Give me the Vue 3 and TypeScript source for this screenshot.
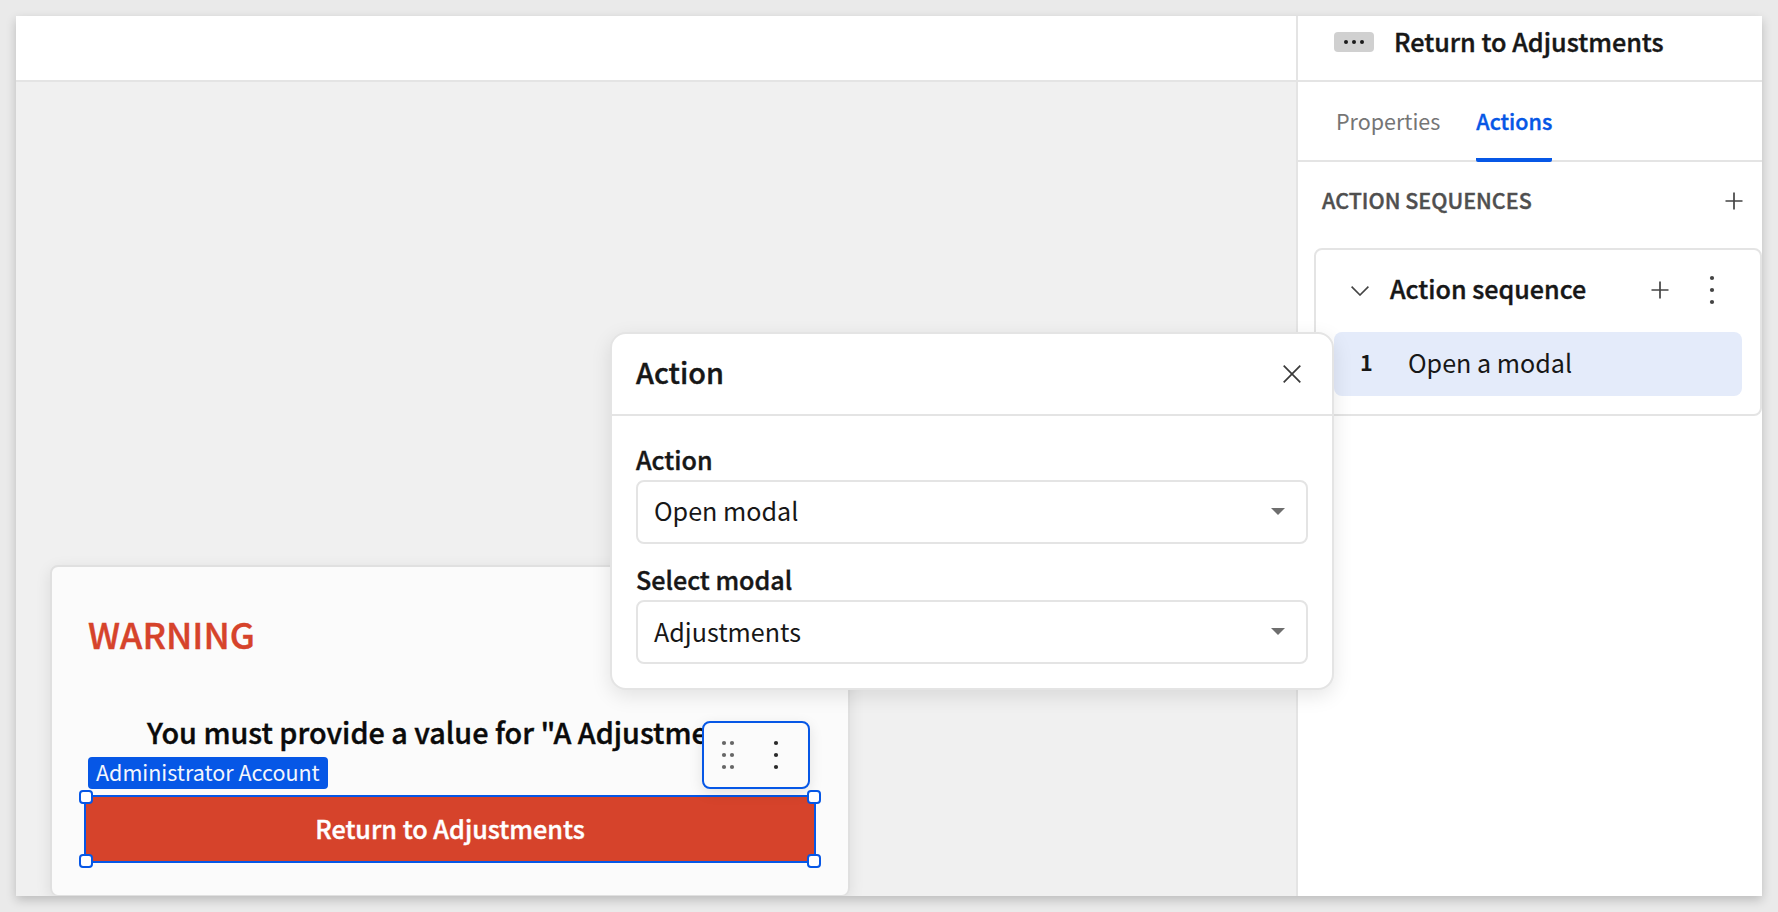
<script setup lang="ts">
interface Field {
  label: string
  value: string
}

const title = 'Return to Adjustments'
const tabs: string[] = ['Properties', 'Actions']
const activeTab = 'Actions'
const fields: Field[] = [
  { label: 'Action', value: 'Open modal' },
  { label: 'Select modal', value: 'Adjustments' },
]
const corners: string[] = ['tl', 'tr', 'bl', 'br']
const dotRows: number[] = [6, 18, 30]
</script>

<template>
  <div class="page">
    <div class="window">
      <main class="workspace">
        <div class="topbar"></div>
        <div class="canvas">
          <section class="card">
            <h1 class="warning">WARNING</h1>
            <p class="message">You must provide a value for "A Adjustment"</p>
            <div class="selection">
              <button class="return">{{ title }}</button>
              <span class="tag">Administrator Account</span>
              <div class="tools">
                <svg width="36" height="36" viewBox="0 0 36 36" fill="#666">
                  <template v-for="y in dotRows" :key="y">
                    <circle cx="14" :cy="y" r="2.1" />
                    <circle cx="22" :cy="y" r="2.1" />
                  </template>
                </svg>
                <svg width="36" height="36" viewBox="0 0 36 36" fill="#292929">
                  <circle v-for="y in dotRows" :key="y" cx="18" :cy="y" r="2.1" />
                </svg>
              </div>
              <i v-for="c in corners" :key="c" class="handle" :class="c"></i>
            </div>
          </section>
        </div>
      </main>

      <aside class="sidebar">
        <header class="head">
          <svg class="chip" width="40" height="20" viewBox="0 0 40 20">
            <rect width="40" height="20" rx="4" fill="#d0d0d0" />
            <circle cx="12" cy="10" r="2" fill="#1a1a1a" />
            <circle cx="20" cy="10" r="2" fill="#1a1a1a" />
            <circle cx="28" cy="10" r="2" fill="#1a1a1a" />
          </svg>
          <span class="semi">{{ title }}</span>
        </header>
        <nav class="tabs">
          <a v-for="t in tabs" :key="t" class="tab" :class="{ active: t === activeTab }">{{ t }}</a>
        </nav>
        <div class="group">
          <span class="semi">ACTION SEQUENCES</span>
          <svg width="18" height="18" viewBox="0 0 18 18" stroke="#444" stroke-width="1.7">
            <path d="M.5 9h17M9 .5v17" />
          </svg>
        </div>
        <section class="sequence">
          <div class="seq-head">
            <svg width="18" height="10" viewBox="0 0 18 10" fill="none" stroke="#444" stroke-width="1.6">
              <path d="M.6.6 9 9 17.4.6" />
            </svg>
            <span class="seq-name semi">Action sequence</span>
            <svg class="plus" width="18" height="18" viewBox="0 0 18 18" stroke="#444" stroke-width="1.7">
              <path d="M.5 9h17M9 .5v17" />
            </svg>
            <svg class="more" width="6" height="36" viewBox="0 0 6 36" fill="#444">
              <circle v-for="y in dotRows" :key="y" cx="3" :cy="y" r="2.1" />
            </svg>
          </div>
          <div class="step">
            <span class="step-number">1</span>
            <span>Open a modal</span>
          </div>
        </section>
      </aside>
    </div>

    <div class="popup">
      <header class="popup-head">
        <span class="semi">Action</span>
        <svg width="18" height="18" viewBox="0 0 18 18" stroke="#3a3a3a" stroke-width="1.7">
          <path d="M.7.7l16.6 16.6M17.3.7.7 17.3" />
        </svg>
      </header>
      <div class="popup-body">
        <div v-for="f in fields" :key="f.label" class="field">
          <label class="label semi">{{ f.label }}</label>
          <div class="select">
            <span class="value">{{ f.value }}</span>
            <svg width="14" height="7" viewBox="0 0 14 7"><path d="M0 0h14L7 7z" fill="#6e6e6e" /></svg>
          </div>
        </div>
      </div>
    </div>
  </div>
</template>

<style>
body {
  background: #eaeaea;
}
</style>

<style scoped>
* {
  box-sizing: border-box;
}
.page {
  position: relative;
  width: 1778px;
  height: 912px;
  padding: 16px;
  overflow: hidden;
  background: #eaeaea;
  color: #171717;
  font-family: "Noto Sans CJK SC", "Noto Sans", sans-serif;
  font-size: 25.1px;
  line-height: 32px;
  white-space: nowrap;
}
svg {
  flex: none;
  display: block;
}
.semi,
.warning,
.message,
.return,
.tab.active {
  font-weight: 500;
  -webkit-text-stroke: 0.4px currentColor;
}
.window {
  display: flex;
  width: 1746px;
  height: 880px;
  background: #fff;
  box-shadow: 0 4px 10px rgba(0, 0, 0, 0.2);
}
.workspace {
  flex: 1;
  display: flex;
  flex-direction: column;
  min-width: 0;
}
.topbar {
  height: 66px;
  border-bottom: 2px solid #e4e4e4;
}
.canvas {
  flex: 1;
  display: flex;
  align-items: flex-end;
  padding-left: 34px;
  background: #f0f0f0;
  overflow: hidden;
}
.card {
  width: 800px;
  height: 331px;
  padding: 42px 32px 0;
  border: 2px solid #e0e0e0;
  border-bottom-width: 1px;
  border-radius: 8px;
  background: #fbfbfb;
  box-shadow: 0 4px 16px rgba(0, 0, 0, 0.09);
}
.warning {
  margin: 0;
  padding-left: 4px;
  color: #d6432b;
  font-size: 35.9px;
  line-height: 48px;
}
.message {
  margin: 57px 0 0;
  padding-left: 63px;
  color: #0a0a0a;
  font-size: 28.75px;
  line-height: 36px;
}
.selection {
  position: relative;
  width: 732px;
  height: 68px;
  margin-top: 45px;
  border: 2px solid #0657e6;
}
.return {
  width: 100%;
  height: 100%;
  padding: 0 0 2px;
  border: 0;
  background: #d6432b;
  color: #fff;
  font-family: inherit;
  font-size: 25.2px;
  line-height: 32px;
}
.tag {
  position: absolute;
  left: 2px;
  top: -40px;
  width: 240px;
  height: 32px;
  padding-left: 8px;
  border-radius: 4px;
  background: #0657e6;
  color: #f3f6fd;
  font-size: 21.5px;
  line-height: 30px;
}
.tools {
  position: absolute;
  left: 616px;
  top: -76px;
  display: flex;
  gap: 12px;
  width: 108px;
  height: 68px;
  padding: 14px 0 0 6px;
  border: 2px solid #0657e6;
  border-radius: 8px;
  background: #fbfbfb;
  box-shadow: 0 4px 14px rgba(0, 0, 0, 0.1);
}
.handle {
  position: absolute;
  width: 14px;
  height: 14px;
  border: 2px solid #0657e6;
  border-radius: 4px;
  background: #fff;
}
.tl { left: -7px; top: -7px; }
.tr { right: -7px; top: -7px; }
.bl { left: -7px; bottom: -7px; }
.br { right: -7px; bottom: -7px; }

.sidebar {
  width: 466px;
  border-left: 2px solid #e4e4e4;
  background: #fff;
}
.head {
  display: flex;
  height: 66px;
  padding: 9px 0 0 36px;
  border-bottom: 2px solid #e4e4e4;
  font-size: 25.2px;
}
.chip {
  margin: 7px 20px 0 0;
}
.tabs {
  display: flex;
  gap: 36px;
  height: 80px;
  padding: 23px 0 0 38px;
  border-bottom: 2px solid #e4e4e4;
  color: #757575;
  font-size: 21.5px;
}
.tab.active {
  height: 57px;
  border-bottom: 4px solid #0657e6;
  border-radius: 2px;
  color: #0657e6;
}
.group {
  display: flex;
  justify-content: space-between;
  height: 86px;
  padding: 22px 19px 0 24px;
  color: #4f4f4f;
  font-size: 21.5px;
}
.group svg {
  margin-top: 8px;
}
.sequence {
  width: 448px;
  height: 168px;
  margin-left: 16px;
  border: 2px solid #e4e4e4;
  border-radius: 8px;
}
.seq-head {
  display: flex;
  align-items: flex-start;
  height: 82px;
  padding: 22px 0 0 35px;
}
.seq-head svg:first-child {
  margin: 14px 21px 0 0;
}
.seq-name {
  width: 261px;
}
.plus {
  margin-top: 9px;
}
.more {
  margin: 0 0 0 40px;
}
.step {
  display: flex;
  width: 408px;
  height: 64px;
  margin-left: 18px;
  padding: 14px 0 0 26px;
  border-radius: 8px;
  background: #e4ebfa;
}
.step-number {
  width: 48px;
  font-size: 21.6px;
  font-weight: 700;
}
.popup {
  position: absolute;
  left: 610px;
  top: 332px;
  width: 724px;
  height: 358px;
  border: 2px solid #e4e4e4;
  border-radius: 16px;
  background: #fff;
  box-shadow: 0 6px 20px rgba(0, 0, 0, 0.1);
}
.popup-head {
  display: flex;
  justify-content: space-between;
  height: 82px;
  padding: 22px 31px 0 24px;
  border-bottom: 2px solid #e4e4e4;
  font-size: 28.8px;
}
.popup-head svg {
  margin-top: 9px;
}
.popup-body {
  display: flex;
  flex-direction: column;
  gap: 19px;
  padding: 27px 24px 0;
}
.label {
  display: block;
  height: 37px;
}
.select {
  display: flex;
  justify-content: space-between;
  height: 64px;
  padding: 12px 21px 0 16px;
  border: 2px solid #e4e4e4;
  border-radius: 8px;
}
.field:last-child .value {
  padding-top: 1px;
}
.select svg {
  margin-top: 14px;
}
</style>
